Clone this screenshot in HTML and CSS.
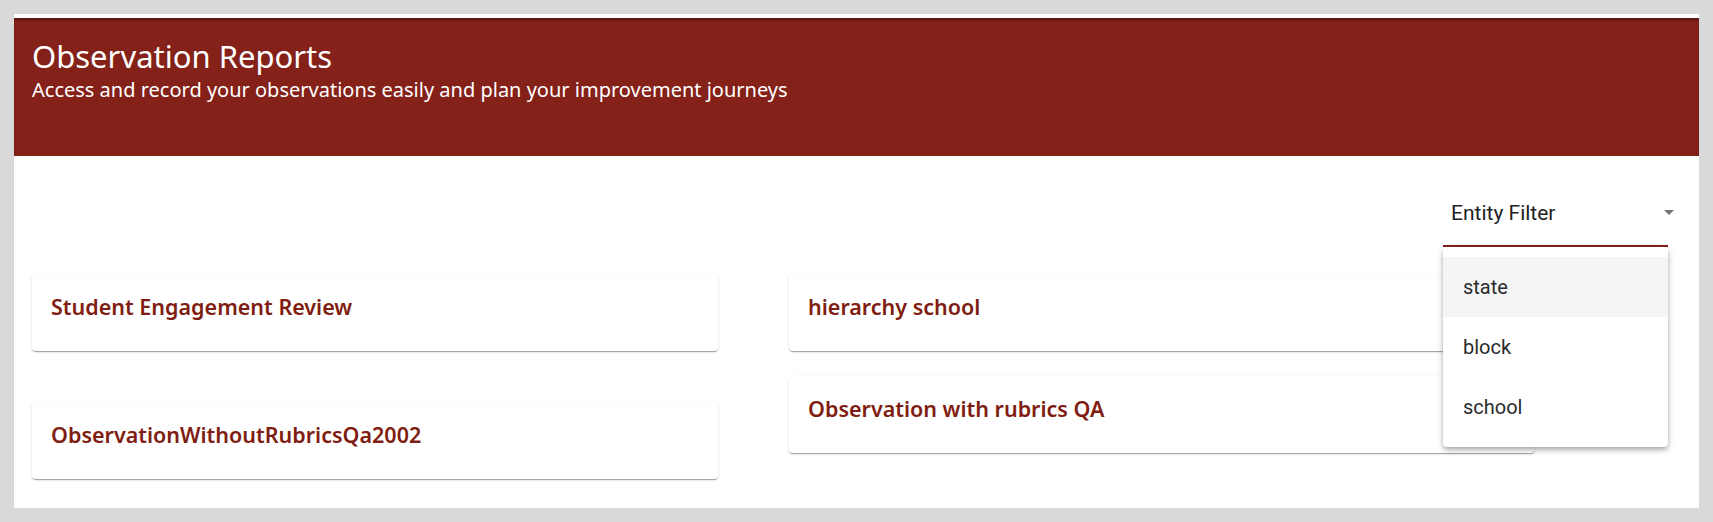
FILE: index.html
```html
<!DOCTYPE html>
<html lang="en">
<head>
  <meta charset="UTF-8" />
  <meta name="viewport" content="width=device-width, initial-scale=1.0"/>
  <title>Observation Reports</title>
  <link rel="stylesheet" href="styles.css">
</head>
<body>
  <div class="panel">
    <div class="banner">
      <h1>Observation Reports</h1>
      <p>Access and record your observations easily and plan your improvement journeys</p>
    </div>

    <div class="content">
      <div class="filter-row">
        <div class="filter">
          <span class="filter-label">Entity Filter</span>
          <span class="arrow"></span>
        </div>
      </div>

      <div class="cards">
        <div class="col col-left">
          <div class="card"><span>Student Engagement Review</span></div>
          <div class="card"><span>ObservationWithoutRubricsQa2002</span></div>
        </div>
        <div class="col col-right">
          <div class="card"><span>hierarchy school</span></div>
          <div class="card"><span>Observation with rubrics QA</span></div>
        </div>
      </div>
    </div>

    <div class="menu">
      <div class="option active">state</div>
      <div class="option">block</div>
      <div class="option">school</div>
    </div>
  </div>
</body>
</html>
```

FILE: styles.css
```css
body {
  margin: 0;
  padding: 14px;
  background-color: #d9d9d9;
  font-family: 'Noto Sans', 'Open Sans', sans-serif;
}
.panel {
  position: relative;
  background: #fff;
  height: 494px;
  padding-top: 4px;
  box-sizing: border-box;
}
.banner {
  background-color: #842119;
  color: #fff;
  height: 138px;
  padding: 18px 18px 0;
  box-sizing: border-box;
  box-shadow: inset 0 3px 3px -1px rgba(0,0,0,0.35);
}
.banner h1 {
  font-weight: 400;
  font-size: 31px;
  line-height: 41px;
  margin: 0;
}
.banner p {
  font-size: 20px;
  line-height: 26px;
  margin: 0;
}
.content {
  padding: 0 18px;
}
.filter-row {
  display: flex;
  justify-content: flex-end;
  padding-right: 13px;
  padding-top: 24px;
}
.filter {
  width: 225px;
  height: 67px;
  box-sizing: border-box;
  border-bottom: 2px solid #842119;
  display: flex;
  align-items: center;
  justify-content: space-between;
  padding: 0 0 0 8px;
  font-family: Roboto, 'Liberation Sans', sans-serif;
}
.filter-label {
  font-size: 21px;
  color: #222;
}
.arrow {
  width: 0;
  height: 0;
  border-left: 5px solid transparent;
  border-right: 5px solid transparent;
  border-top: 5px solid #757575;
  margin-right: -6px;
}
.cards {
  display: grid;
  grid-template-columns: 686px 746px;
  column-gap: 71px;
  margin-top: 27px;
}
.col {
  display: flex;
  flex-direction: column;
}
.col-left {
  gap: 51px;
}
.col-right {
  gap: 25px;
}
.card {
  height: 77px;
  box-sizing: border-box;
  border-radius: 4px;
  box-shadow: 0 2px 1px -1px rgba(0,0,0,0.2), 0 1px 1px 0 rgba(0,0,0,0.14), 0 1px 3px 0 rgba(0,0,0,0.12);
  padding: 18px 0 0 19px;
  color: #7f1d12;
  font-size: 21.5px;
  line-height: 30px;
  font-weight: 600;
}
.menu {
  position: absolute;
  left: 1429px;
  top: 233px;
  width: 225px;
  padding: 10px 0;
  background: #fff;
  border-radius: 4px;
  box-shadow: 0 2px 4px -1px rgba(0,0,0,0.2), 0 4px 5px 0 rgba(0,0,0,0.14), 0 1px 10px 0 rgba(0,0,0,0.12);
  font-family: Roboto, 'Liberation Sans', sans-serif;
}
.option {
  height: 60px;
  line-height: 60px;
  padding-left: 20px;
  font-size: 20px;
  color: #2b2b2b;
}
.option.active {
  background: #f5f5f5;
}
```
